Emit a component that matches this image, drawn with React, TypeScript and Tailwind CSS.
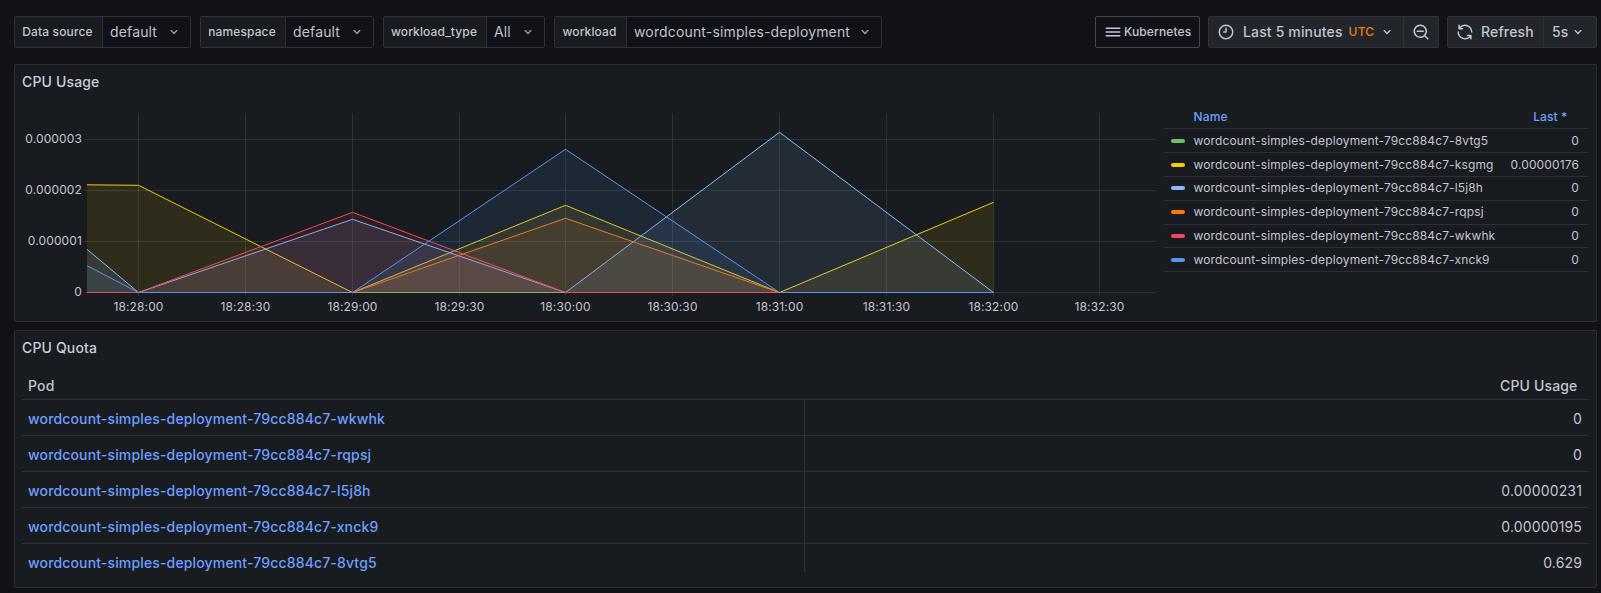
import React from 'react';

const X = [87, 138.5, 352.5, 565.5, 779.5, 993.5];
const BASE = 292.5;

// y pixels for each sample, read off the chart
const series = [
  { name: '8vtg5', color: '#73BF69', last: '0', ys: [BASE, BASE, BASE, BASE, BASE, BASE] },
  { name: 'ksgmg', color: '#F2CC0C', last: '0.00000176', ys: [184.8, 185.3, BASE, 205.3, BASE, 202.3] },
  { name: 'l5j8h', color: '#8AB8FF', last: '0', ys: [249.3, BASE, 219.3, BASE, 132.3, BASE] },
  { name: 'rqpsj', color: '#FF780A', last: '0', ys: [BASE, BASE, BASE, 218.3, BASE, BASE] },
  { name: 'wkwhk', color: '#F2495C', last: '0', ys: [BASE, BASE, 212.3, BASE, BASE, BASE] },
  { name: 'xnck9', color: '#5794F2', last: '0', ys: [265.7, BASE, BASE, 149.3, BASE, BASE] },
];

const POD = 'wordcount-simples-deployment-79cc884c7-';
const quota = [
  { pod: 'wkwhk', value: '0' },
  { pod: 'rqpsj', value: '0' },
  { pod: 'l5j8h', value: '0.00000231' },
  { pod: 'xnck9', value: '0.00000195' },
  { pod: '8vtg5', value: '0.629' },
];

const xTicks = [
  { x: 138.5, t: '18:28:00' }, { x: 245.5, t: '18:28:30' }, { x: 352.5, t: '18:29:00' }, { x: 459.5, t: '18:29:30' },
  { x: 565.5, t: '18:30:00' }, { x: 672.5, t: '18:30:30' }, { x: 779.5, t: '18:31:00' }, { x: 886.5, t: '18:31:30' },
  { x: 993.5, t: '18:32:00' }, { x: 1099.5, t: '18:32:30' },
];
const yTicks = [
  { y: 139.5, t: '0.000003' }, { y: 190.5, t: '0.000002' }, { y: 241.5, t: '0.000001' }, { y: BASE, t: '0' },
];

const Icon = ({ d, className = 'w-[18px] h-[18px]' }: { d: string; className?: string }) => (
  <svg viewBox="0 0 24 24" className={className} fill="currentColor">
    <path d={d} />
  </svg>
);

const ANGLE_DOWN = 'M17,9.17a1,1,0,0,0-1.41,0L12,12.71,8.46,9.17a1,1,0,0,0-1.41,0,1,1,0,0,0,0,1.42l4.24,4.24a1,1,0,0,0,1.42,0L17,10.59A1,1,0,0,0,17,9.17Z';
const BARS = 'M3,8H21a1,1,0,0,0,0-2H3A1,1,0,0,0,3,8Zm18,8H3a1,1,0,0,0,0,2H21a1,1,0,0,0,0-2Zm0-5H3a1,1,0,0,0,0,2H21a1,1,0,0,0,0-2Z';
const CLOCK = 'M12,2A10,10,0,1,0,22,12,10.01114,10.01114,0,0,0,12,2Zm0,18a8,8,0,1,1,8-8A8.00917,8.00917,0,0,1,12,20ZM12,6a1,1,0,0,0-1,1v4H9a1,1,0,0,0,0,2h3a1,1,0,0,0,1-1V7A1,1,0,0,0,12,6Z';
const SEARCH_MINUS = 'M21.71,20.29,18,16.61A9,9,0,1,0,16.61,18l3.68,3.68a1,1,0,0,0,1.42,0A1,1,0,0,0,21.71,20.29ZM11,18a7,7,0,1,1,7-7A7,7,0,0,1,11,18ZM15,10H7a1,1,0,0,0,0,2h8a1,1,0,0,0,0-2Z';
const SYNC = 'M19.91,15.51H15.38a1,1,0,0,0,0,2h2.4A8,8,0,0,1,4,12a1,1,0,0,0-2,0,10,10,0,0,0,16.88,7.23V21a1,1,0,0,0,2,0V16.5A1,1,0,0,0,19.91,15.51ZM12,2A10,10,0,0,0,5.12,4.77V3a1,1,0,0,0-2,0V7.5a1,1,0,0,0,1,1h4.5a1,1,0,0,0,0-2H6.22A8,8,0,0,1,20,12a1,1,0,0,0,2,0A10,10,0,0,0,12,2Z';

const VarPicker = ({ label, value, outer, labelW }: { label: string; value: string; outer: string; labelW: string }) => (
  <div className={`flex h-8 ${outer} rounded-[2px] border border-[#2f3136]`}>
    <div className={`flex items-center justify-center ${labelW} bg-[#181b1f] border-r border-[#2f3136] pr-[2px] text-xs font-medium tracking-[0.13px] text-[#c4c4d2] rounded-l-[2px]`}>
      {label}
    </div>
    <div className="flex flex-1 items-center justify-between bg-[#111217] pl-[7px] pr-2 text-sm text-[#c0c0ce] rounded-r-[2px]">
      <span>{value}</span>
      <Icon d={ANGLE_DOWN} className="w-4 h-4 text-[#9fa0ab]" />
    </div>
  </div>
);

const Chart = () => (
  <svg width="1148" height="221" viewBox="15 99 1148 221" className="shrink-0 tracking-[0.13px]">
    {yTicks.map((t) => (
      <g key={t.t}>
        <line x1="84" x2="1156" y1={t.y} y2={t.y} stroke="#f0faff" strokeOpacity="0.1" />
        <text x="82" y={t.y + 3.5} textAnchor="end" fontSize="12" fill="#c4c4d2">{t.t}</text>
      </g>
    ))}
    {xTicks.map((t) => (
      <g key={t.t}>
        <line x1={t.x} x2={t.x} y1="113" y2="296" stroke="#f0faff" strokeOpacity="0.1" />
        <text x={t.x} y="311" textAnchor="middle" fontSize="12" fill="#c4c4d2">{t.t}</text>
      </g>
    ))}
    {series.map((s) => {
      const pts = X.map((x, i) => `${x},${s.ys[i]}`).join(' ');
      return (
        <g key={s.name}>
          <polygon points={`87,${BASE} ${pts} 993.5,${BASE}`} fill={s.color} fillOpacity="0.1" />
          <polyline points={pts} fill="none" stroke={s.color} strokeWidth="1" />
        </g>
      );
    })}
  </svg>
);

const Legend = () => (
  <div className="w-[424.5px] mt-[5.4px] text-xs tracking-[0.13px] text-[#c4c4d2]">
    <div className="flex h-[25px] items-center justify-between border-b border-[#2d2f34] pt-[2px] font-medium text-[#6E9FFF]">
      <span className="ml-[30.5px]">Name</span>
      <span className="mr-[20px]">Last *</span>
    </div>
    {series.map((s) => (
      <div key={s.name} className="flex h-[23.8px] items-center border-b border-[#2d2f34]">
        <span className="ml-[8px] w-[14px] h-1 rounded-full" style={{ backgroundColor: s.color }} />
        <span className="ml-[8.5px] flex-1">{POD}{s.name}</span>
        <span className="mr-[8.5px]">{s.last}</span>
      </div>
    ))}
  </div>
);

const QuotaTable = () => (
  <div className="mt-[7px] ml-[7px] w-[1566px] text-sm">
    <div className="flex h-7 items-start justify-between border-b border-[#2f3136] font-medium text-[#c4c4d2]">
      <span className="ml-[6px] mt-[4px]">Pod</span>
      <span className="mr-[10.5px] mt-[4px]">CPU Usage</span>
    </div>
    {quota.map((row, i) => (
      <div key={row.pod} className={`flex h-9 items-start ${i < quota.length - 1 ? 'border-b border-[#2f3136]' : ''}`}>
        <a className="w-[782px] pl-[6px] font-medium leading-[38px] text-[#6E9FFF]">{POD}{row.pod}</a>
        <div className={`flex-1 border-l border-[#2f3136] pr-[6px] text-right leading-[38px] text-[#c4c4d2] ${i < quota.length - 1 ? 'h-[35px]' : 'h-[28px]'}`}>
          {row.value}
        </div>
      </div>
    ))}
  </div>
);

const Panel = ({ title, children }: { title: string; children: React.ReactNode }) => (
  <div className="w-[1583px] h-[258px] rounded-[2px] border border-[#2c2e33] bg-[#181b1f]">
    <div className="flex h-[34px] items-center pl-[7px] text-sm font-medium text-[#ccccdc]">{title}</div>
    {children}
  </div>
);

export default function App() {
  return (
    <div className="w-[1601px] h-[593px] overflow-hidden bg-[#111217] pt-4 pl-[14px] text-[#ccccdc] tracking-[0.15px] [font-family:Inter,'Liberation_Sans',sans-serif]">
      <div className="flex h-8 items-center justify-between pr-[4px]">
        <div className="flex gap-[9px]">
          <VarPicker label="Data source" value="default" outer="w-[177px]" labelW="w-[88px]" />
          <VarPicker label="namespace" value="default" outer="w-[174px]" labelW="w-[85px]" />
          <VarPicker label="workload_type" value="All" outer="w-[162px]" labelW="w-[103px]" />
          <VarPicker label="workload" value="wordcount-simples-deployment" outer="w-[328px]" labelW="w-[72px]" />
        </div>
        <div className="flex items-center gap-2">
          <button className="flex h-8 w-[105px] items-center rounded-[2px] border border-[#45474d] bg-[#111217] pl-[8px] text-xs font-medium tracking-[0.13px] text-[#c4c4d2]">
            <Icon d={BARS} />
            <span className="ml-[2px]">Kubernetes</span>
          </button>
          <div className="flex h-8 w-[231px] items-center rounded-[2px] border border-[#2f3136] bg-[#22252b] font-medium text-[#c4c4d2]">
            <div className="flex flex-1 items-center pl-[8px]">
              <Icon d={CLOCK} />
              <span className="ml-[8px] text-sm">Last 5 minutes</span>
              <span className="ml-[6px] text-xs text-[#e8800f]">UTC</span>
              <Icon d={ANGLE_DOWN} className="ml-[5px] w-4 h-4" />
            </div>
            <div className="flex h-full w-[35px] items-center justify-center border-l border-[#2f3136]">
              <Icon d={SEARCH_MINUS} />
            </div>
          </div>
          <div className="flex h-8 w-[150px] items-center rounded-[2px] border border-[#2f3136] bg-[#22252b] font-medium text-[#c4c4d2]">
            <div className="flex w-[95px] items-center pl-[8px] text-sm">
              <Icon d={SYNC} />
              <span className="ml-[7px]">Refresh</span>
            </div>
            <div className="flex h-full flex-1 items-center border-l border-[#2f3136] pl-[8px] text-sm">
              <span>5s</span>
              <Icon d={ANGLE_DOWN} className="ml-[1px] w-4 h-4" />
            </div>
          </div>
        </div>
      </div>
      <div className="mt-4 flex flex-col gap-2">
        <Panel title="CPU Usage">
          <div className="flex">
            <Chart />
            <Legend />
          </div>
        </Panel>
        <Panel title="CPU Quota">
          <QuotaTable />
        </Panel>
      </div>
    </div>
  );
}
